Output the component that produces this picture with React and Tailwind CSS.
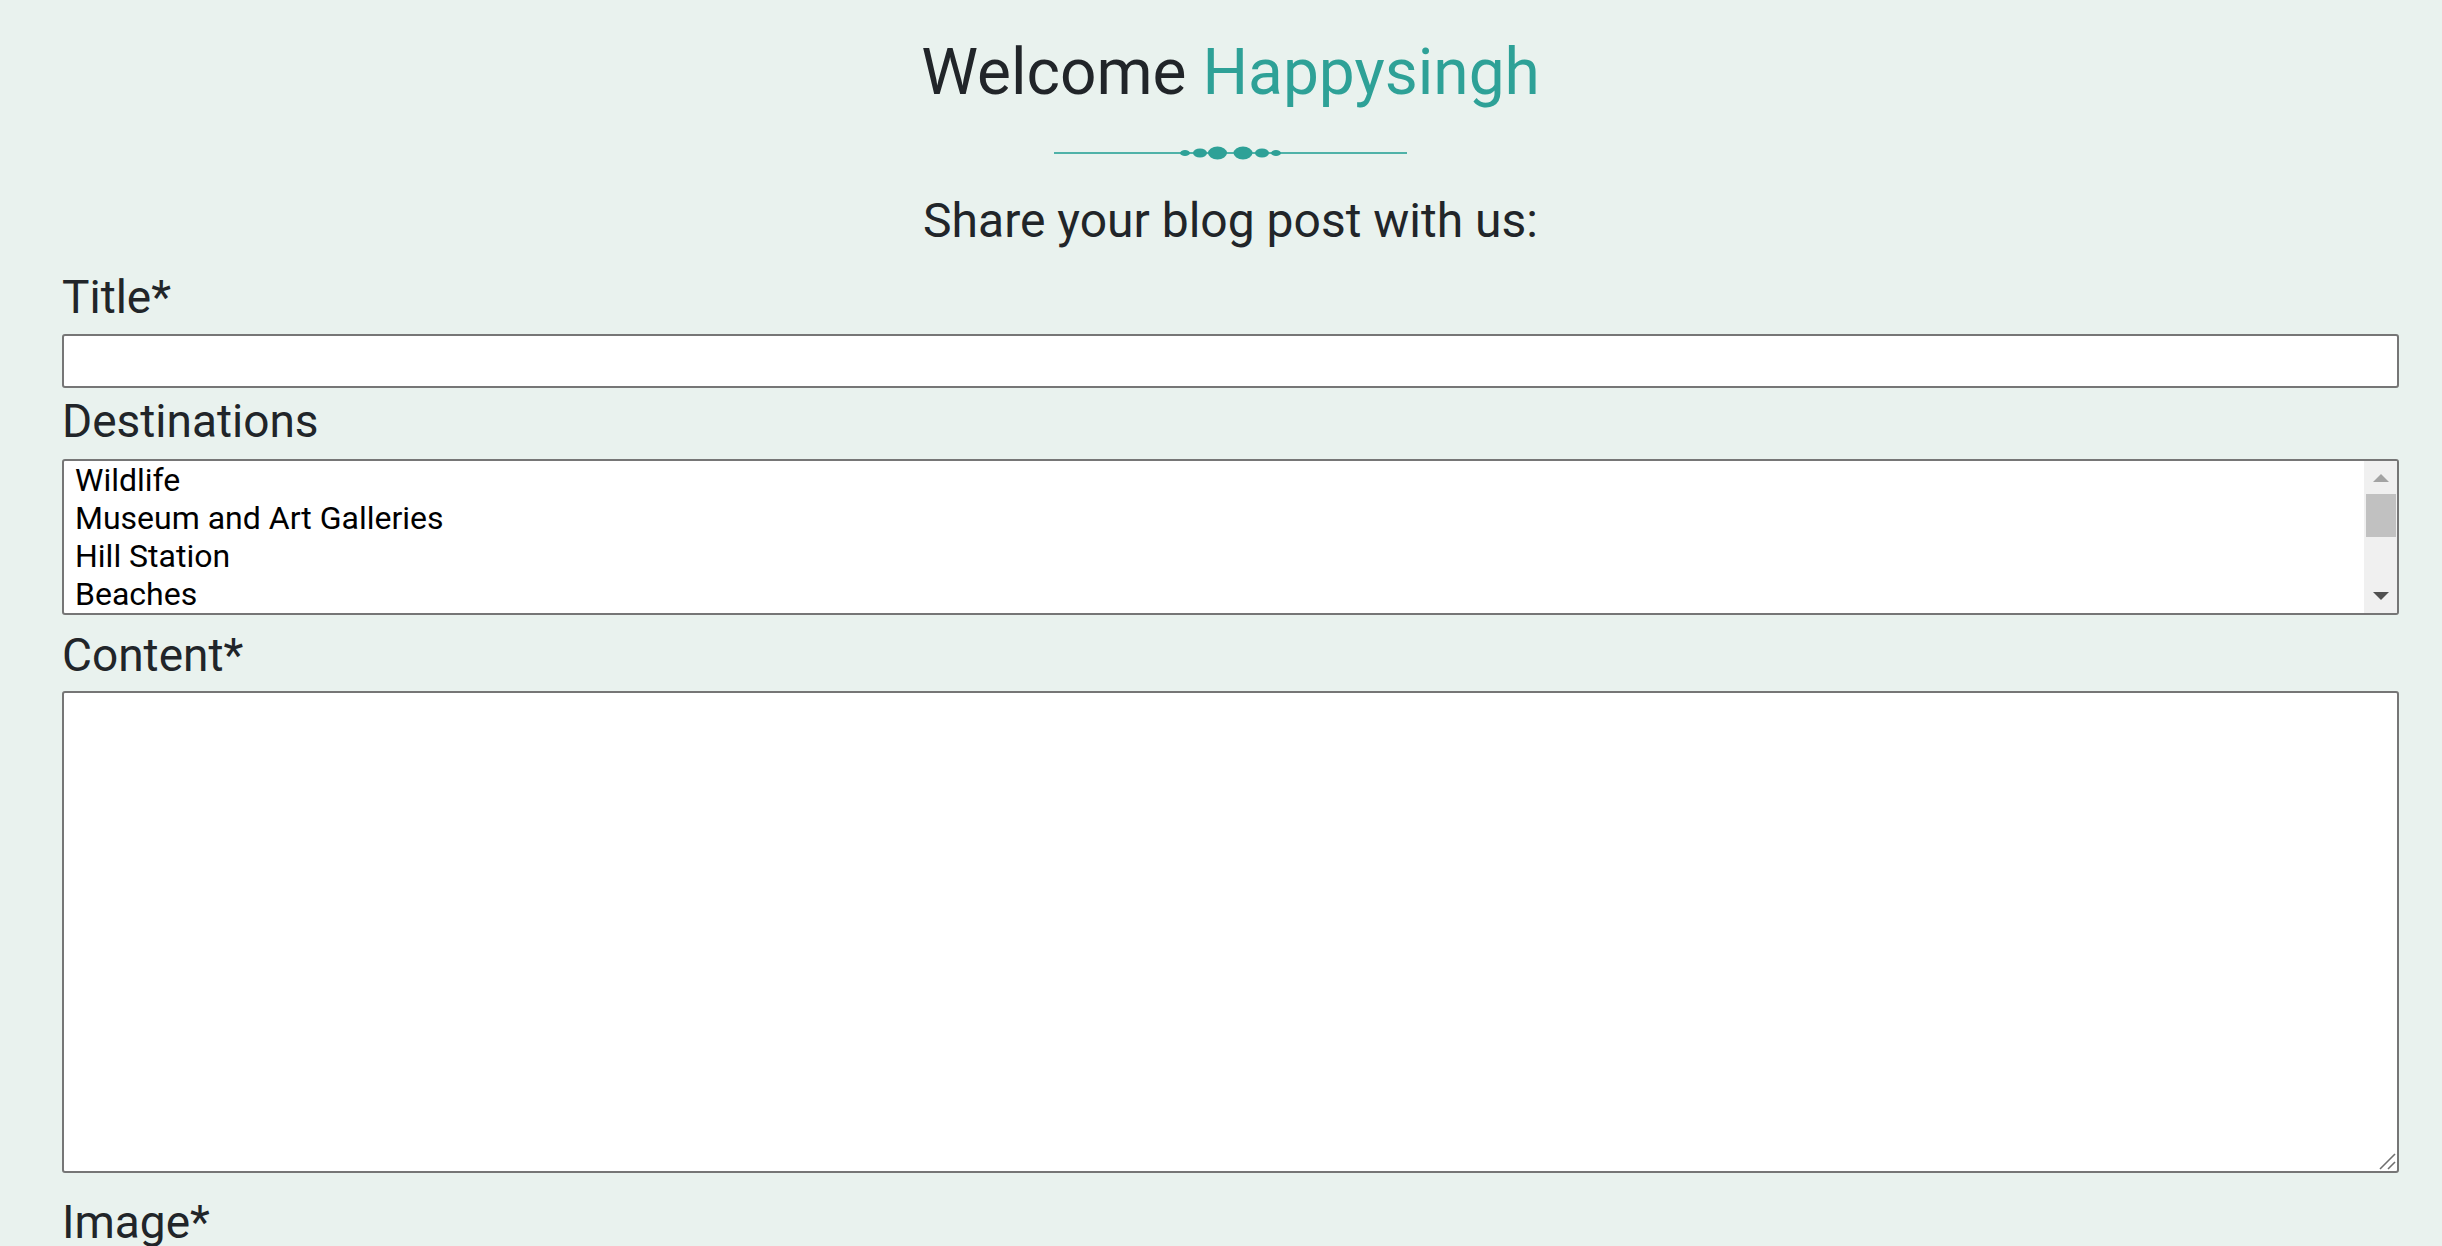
import React from 'react';

const font = { fontFamily: 'Roboto, "Noto Sans", Arial, sans-serif' };

const destinations = ['Wildlife', 'Museum and Art Galleries', 'Hill Station', 'Beaches'];

function Divider() {
  return (
    <svg width="353" height="16" viewBox="0 0 353 16" className="block">
      <defs>
        <filter id="soft" x="-20%" y="-50%" width="140%" height="200%">
          <feGaussianBlur stdDeviation="0.6" />
        </filter>
      </defs>
      <line x1="0" y1="8" x2="353" y2="8" stroke="#4fb2a8" strokeWidth="2" />
      <g fill="#2ea197" filter="url(#soft)">
        <ellipse cx="131" cy="8" rx="5" ry="3" />
        <ellipse cx="146" cy="8" rx="7" ry="4.5" />
        <ellipse cx="163.5" cy="8" rx="9.5" ry="6.5" />
        <ellipse cx="189" cy="8" rx="9.5" ry="6.5" />
        <ellipse cx="208" cy="8" rx="7" ry="4.5" />
        <ellipse cx="222" cy="8" rx="5" ry="3" />
      </g>
    </svg>
  );
}

function Label({ children, className = '' }) {
  return (
    <label className={`block text-[46px] leading-[52px] text-[#212529] ${className}`}>{children}</label>
  );
}

function ListBox() {
  return (
    <div className="flex h-[156px] w-full overflow-hidden rounded-[3px] border-2 border-[#767676] bg-white">
      <ul className="flex-1 pl-[11px] text-[32px] leading-[38px] text-black">
        {destinations.map((d) => (
          <li key={d}>{d}</li>
        ))}
      </ul>
      {/* scrollbar */}
      <div className="flex w-[33px] flex-col items-center bg-[#f0f0f0]">
        <div className="mt-[13px] h-0 w-0 border-x-[8px] border-b-[8px] border-x-transparent border-b-[#a3a3a3]" />
        <div className="mt-[12px] h-[43px] w-[30px] bg-[#c1c1c1]" />
        <div className="mt-auto mb-[13px] h-0 w-0 border-x-[8px] border-t-[8px] border-x-transparent border-t-[#505050]" />
      </div>
    </div>
  );
}

export default function App() {
  return (
    <div className="h-screen overflow-hidden bg-[#e9f2ee]" style={font}>
      <div className="pl-[62px] pr-[43px]">
        <div className="flex flex-col items-center pt-[33px]">
          <h1 className="text-[64px] leading-[79px] font-normal text-[#212529]">
            Welcome <span className="text-[#2ea197]">Happysingh</span>
          </h1>
          <div className="mt-[33px]">
            <Divider />
          </div>
          <p className="mt-[31px] text-[48px] leading-[58px] text-[#212529]">Share your blog post with us:</p>
        </div>

        <form className="mt-[21px]">
          <Label>Title*</Label>
          <input
            type="text"
            className="mt-[11px] block h-[54px] w-full rounded-[3px] border-2 border-[#767676] bg-white px-3 text-[28px] outline-none"
          />

          <Label className="mt-[7px]">Destinations</Label>
          <div className="mt-[12px]">
            <ListBox />
          </div>

          <Label className="mt-[14px]">Content*</Label>
          <div className="relative mt-[10px]">
            <textarea className="block h-[482px] w-full resize-none rounded-[3px] border-2 border-[#767676] bg-white p-3 text-[28px] outline-none" />
            <svg width="20" height="20" viewBox="0 0 20 20" className="pointer-events-none absolute bottom-[2px] right-[2px]">
              <line x1="3" y1="18" x2="18" y2="3" stroke="#6f6f6f" strokeWidth="1.6" />
              <line x1="11" y1="18" x2="18" y2="11" stroke="#6f6f6f" strokeWidth="1.6" />
            </svg>
          </div>

          <Label className="mt-[23px]">Image*</Label>
        </form>
      </div>
    </div>
  );
}
